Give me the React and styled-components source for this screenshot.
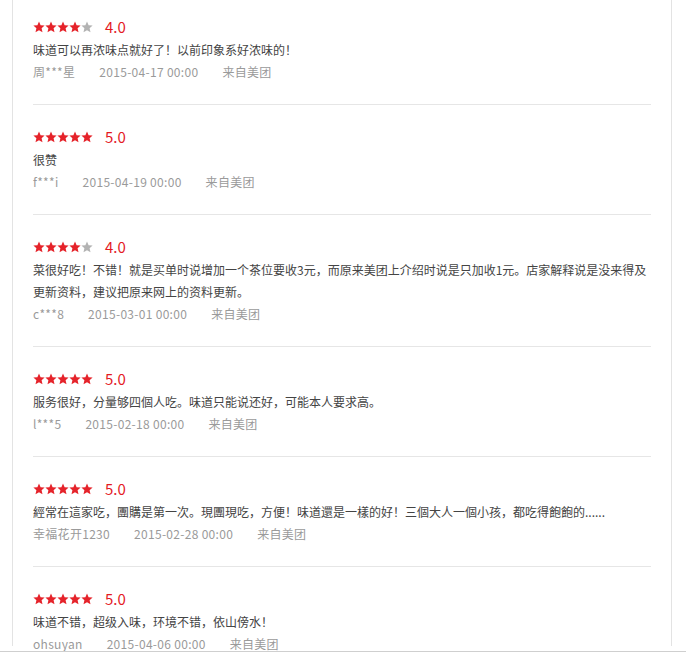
import React from 'react';
import styled, { createGlobalStyle } from 'styled-components';

const GlobalStyle = createGlobalStyle`
  html, body {
    margin: 0;
    padding: 0;
    background: #fff;
  }
  body {
    font-family: "Microsoft YaHei", "Noto Sans CJK SC", "Noto Sans", sans-serif;
  }
`;

const Shell = styled.div`
  height: 651px;
  border-bottom: 1px solid #cfcfcf;
  overflow: hidden;
`;

const Panel = styled.div`
  margin-left: 12px;
  width: 618px;
  height: 100%;
  padding: 0 20px;
  border-left: 1px solid #e3e3e3;
  border-right: 1px solid #e3e3e3;
`;

const ReviewList = styled.ul`
  list-style: none;
  margin: -5px 0 0;
  padding: 0;
`;

const ReviewItem = styled.li`
  padding: 20px 0 21px;
  border-bottom: 1px solid #e6e6e6;

  &:last-child {
    border-bottom: none;
  }
`;

const RatingRow = styled.div`
  display: flex;
  align-items: center;
  height: 24px;
`;

const Stars = styled.div`
  display: flex;
  margin-right: 12px;
`;

const Score = styled.span`
  font-size: 15px;
  color: #e4191f;
  line-height: 24px;
`;

const Content = styled.p`
  margin: 0;
  font-size: 12px;
  line-height: 22px;
  color: #444;
`;

const Meta = styled.div`
  display: flex;
  gap: 24px;
  font-size: 12px;
  line-height: 22px;
  color: #9a9a9a;
  letter-spacing: 0.3px;
`;

const Star = ({ on }) => (
  <svg width="12" height="12" viewBox="0 0 12 12">
    <polygon
      points="6,0.6 7.6,4.3 11.6,4.6 8.6,7.3 9.5,11.3 6,9.2 2.5,11.3 3.4,7.3 0.4,4.6 4.4,4.3"
      fill={on ? '#e5232a' : '#b3b3b3'}
    />
  </svg>
);

const reviews = [
  { score: 4, text: '味道可以再浓味点就好了！以前印象系好浓味的！', user: '周***星', date: '2015-04-17 00:00' },
  { score: 5, text: '很赞', user: 'f***i', date: '2015-04-19 00:00' },
  {
    score: 4,
    text: '菜很好吃！不错！就是买单时说增加一个茶位要收3元，而原来美团上介绍时说是只加收1元。店家解释说是没来得及更新资料，建议把原来网上的资料更新。',
    user: 'c***8',
    date: '2015-03-01 00:00',
  },
  { score: 5, text: '服务很好，分量够四個人吃。味道只能说还好，可能本人要求高。', user: 'l***5', date: '2015-02-18 00:00' },
  {
    score: 5,
    text: '經常在這家吃，團購是第一次。現團現吃，方便！味道還是一樣的好！三個大人一個小孩，都吃得飽飽的......',
    user: '幸福花开1230',
    date: '2015-02-28 00:00',
  },
  { score: 5, text: '味道不错，超级入味，环境不错，依山傍水！', user: 'ohsuyan', date: '2015-04-06 00:00' },
];

const App = () => (
  <>
    <GlobalStyle />
    <Shell>
      <Panel>
        <ReviewList>
          {reviews.map((r, i) => (
            <ReviewItem key={i}>
              <RatingRow>
                <Stars>
                  {[1, 2, 3, 4, 5].map((n) => (
                    <Star key={n} on={n <= r.score} />
                  ))}
                </Stars>
                <Score>{r.score.toFixed(1)}</Score>
              </RatingRow>
              <Content>{r.text}</Content>
              <Meta>
                <span>{r.user}</span>
                <span>{r.date}</span>
                <span>来自美团</span>
              </Meta>
            </ReviewItem>
          ))}
        </ReviewList>
      </Panel>
    </Shell>
  </>
);

export default App;
